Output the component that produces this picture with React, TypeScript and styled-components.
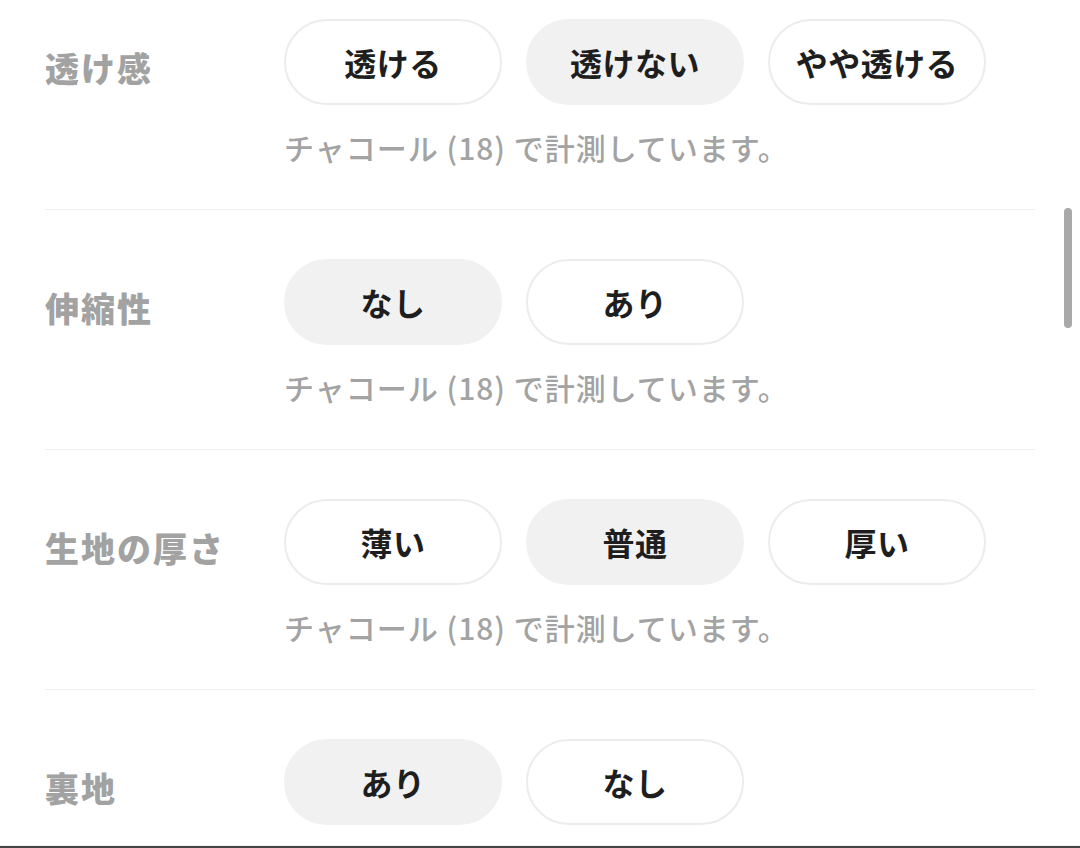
import React from "react";
import styled, { createGlobalStyle } from "styled-components";

type Attr = {
  label: string;
  options: string[];
  selected: number;
  note?: string;
};

const NOTE = "チャコール (18) で計測しています。";

const attrs: Attr[] = [
  { label: "透け感", options: ["透ける", "透けない", "やや透ける"], selected: 1, note: NOTE },
  { label: "伸縮性", options: ["なし", "あり"], selected: 0, note: NOTE },
  { label: "生地の厚さ", options: ["薄い", "普通", "厚い"], selected: 1, note: NOTE },
  { label: "裏地", options: ["あり", "なし"], selected: 0 },
];

const App = (): JSX.Element => {
  return (
    <>
      <GlobalStyle />
      <Screen>
        <List>
          {attrs.map((a) => (
            <Row key={a.label} $last={!a.note}>
              <Label>{a.label}</Label>
              <Body>
                <Options>
                  {a.options.map((o, i) => (
                    <Pill key={o} $active={i === a.selected}>
                      {o}
                    </Pill>
                  ))}
                </Options>
                {a.note && <Note>{a.note}</Note>}
              </Body>
            </Row>
          ))}
        </List>
        <ScrollThumb />
        <BottomEdge />
      </Screen>
    </>
  );
};

export default App;

const GlobalStyle = createGlobalStyle`
  html, body {
    margin: 0;
    padding: 0;
    background: #fff;
  }
  body {
    font-family: "Noto Sans CJK JP", "Noto Sans", sans-serif;
  }
`;

const Screen = styled.div`
  position: relative;
  width: 1080px;
  height: 848px;
  overflow: hidden;
  background: #fff;
`;

/* page is scrolled a bit: first row starts above the viewport */
const List = styled.div`
  margin-top: -30px;
  padding: 0 45px;
`;

const Row = styled.div<{ $last?: boolean }>`
  display: grid;
  grid-template-columns: 239px 1fr;
  padding: 49px 0 ${(p) => (p.$last ? "0" : "39px")};
  border-bottom: ${(p) => (p.$last ? "none" : "1px solid #f0f0f0")};
`;

const Label = styled.div`
  height: 86px;
  display: flex;
  align-items: center;
  padding-top: 10px;
  box-sizing: border-box;
  font-size: 34px;
  font-weight: 900;
  letter-spacing: 2px;
  color: #a2a2a2;
  white-space: nowrap;
`;

const Body = styled.div`
  display: flex;
  flex-direction: column;
`;

const Options = styled.div`
  display: flex;
  gap: 24px;
`;

const Pill = styled.button<{ $active?: boolean }>`
  width: 218px;
  height: 86px;
  box-sizing: border-box;
  border-radius: 43px;
  border: 2px solid ${(p) => (p.$active ? "#f1f1f1" : "#ececec")};
  background: ${(p) => (p.$active ? "#f1f1f1" : "#fff")};
  font-family: inherit;
  font-size: 32px;
  font-weight: 600;
  letter-spacing: 0.5px;
  color: #1e1e1e;
  padding: 0;
  display: flex;
  align-items: center;
  justify-content: center;
`;

const Note = styled.div`
  margin-top: 20px;
  font-size: 30px;
  font-weight: 500;
  letter-spacing: 1px;
  line-height: 45px;
  color: #a3a3a3;
  white-space: nowrap;
`;

const ScrollThumb = styled.div`
  position: absolute;
  right: 8px;
  top: 208px;
  width: 8px;
  height: 120px;
  border-radius: 4px;
  background: #a9a9a9;
`;

const BottomEdge = styled.div`
  position: absolute;
  left: 0;
  right: 0;
  bottom: 0;
  height: 2px;
  background: #454545;
  border-top: 1px solid #f2f2f2;
`;
